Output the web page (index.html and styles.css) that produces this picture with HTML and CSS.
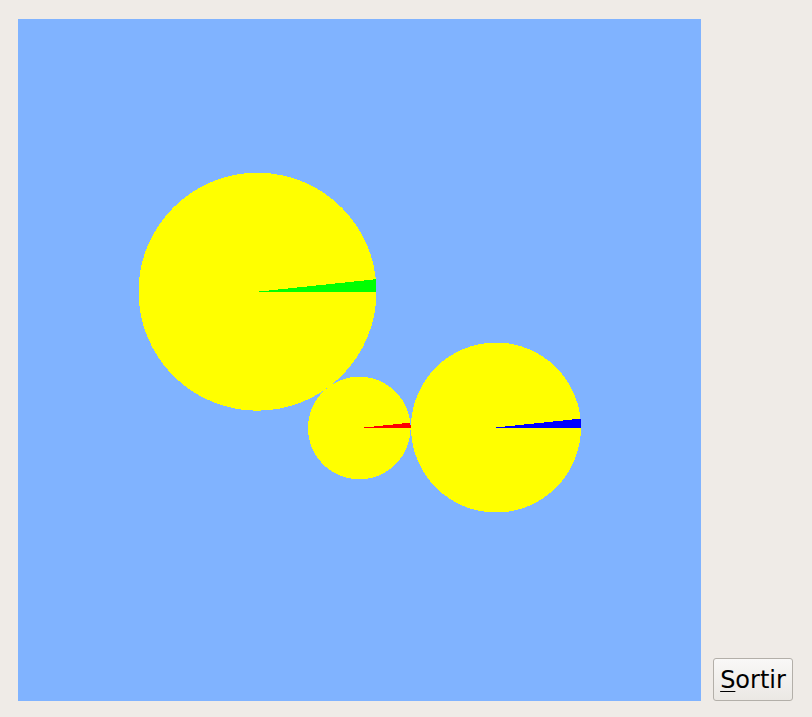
FILE: index.html
```html
<!DOCTYPE html>
<html>
<head>
<meta charset="utf-8">
<link rel="stylesheet" href="styles.css">
</head>
<body>
<div class="window">
  <svg class="canvas" width="683" height="682" viewBox="0 0 683 682" shape-rendering="crispEdges">
    <rect x="0" y="0" width="683" height="682" fill="#80b3ff"/>
    <circle cx="239.5" cy="272.7" r="119" fill="#ffff00"/>
    <path d="M239.5 272.7 L358.5 272.7 A119 119 0 0 0 357.85 260.26 Z" fill="#00ff00"/>
    <circle cx="341.3" cy="409" r="51.3" fill="#ffff00"/>
    <path d="M341.3 409 L392.6 409 A51.3 51.3 0 0 0 392.32 403.64 Z" fill="#ff0000"/>
    <circle cx="478" cy="408.5" r="85" fill="#ffff00"/>
    <path d="M478 408.5 L563 408.5 A85 85 0 0 0 562.53 399.62 Z" fill="#0000ff"/>
  </svg>
  <button class="btn"><span class="mn">S</span>ortir</button>
</div>
</body>
</html>
```
FILE: styles.css
```css
html, body {
  margin: 0;
  padding: 0;
  background: #efebe7;
}
.window {
  display: flex;
  align-items: flex-end;
  gap: 12px;
  padding: 19px 0 0 18px;
}
.canvas {
  display: block;
  flex: none;
}
.btn {
  flex: none;
  box-sizing: border-box;
  width: 80px;
  height: 43px;
  margin: 0;
  padding: 0;
  border: 1px solid #b3afa9;
  border-radius: 3px;
  background: linear-gradient(#f9f8f7, #ebe8e4);
  font-family: "DejaVu Sans", sans-serif;
  font-size: 24px;
  color: #000;
  line-height: 1;
}
.mn {
  text-decoration: underline;
  text-underline-offset: 3px;
  text-decoration-thickness: 1px;
}
```
